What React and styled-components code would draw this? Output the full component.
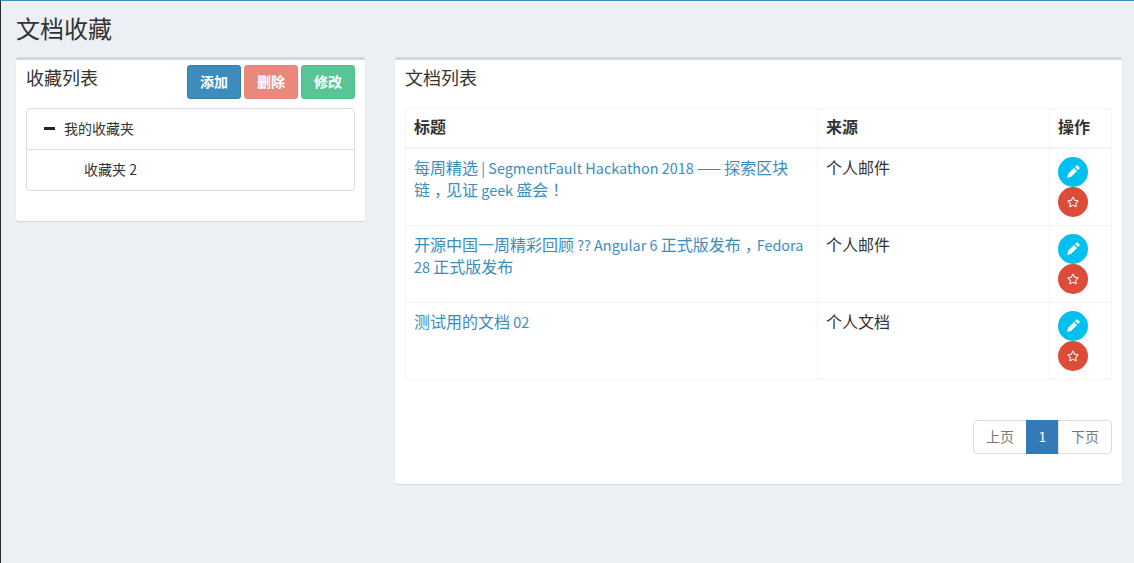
import React from "react";
import styled, { createGlobalStyle } from "styled-components";
import { FaRegStar } from "react-icons/fa";

const GlobalStyle = createGlobalStyle`
    html, body {
        margin: 0;
        padding: 0;
        background: #ecf0f5;
        font-family: "Noto Sans CJK SC", "Source Sans Pro", sans-serif;
        color: #333;
    }
    * { box-sizing: border-box; }
`;

const Page = styled.div`
    height: 563px;
    overflow: hidden;
    background: #ecf0f5;
    border-top: 1px solid #3c8dbc;
    border-left: 1px solid #222d32;
    padding: 0 12px 0 15px;
`;

const PageTitle = styled.h1`
    margin: 0;
    padding: 10px 0 0;
    height: 56px;
    font-size: 24px;
    line-height: 34px;
    font-weight: 400;
`;

const Columns = styled.div`
    display: flex;
    align-items: flex-start;
    gap: 30px;
`;

const Panel = styled.section`
    flex: ${(p) => (p.$wide ? "0 0 727px" : "0 0 349px")};
    height: ${(p) => (p.$wide ? "427px" : "164px")};
    padding: 0 10px;
    background: #fff;
    border-top: 3px solid #d2d6de;
    border-radius: 3px;
    box-shadow: 0 1px 1px rgba(0, 0, 0, 0.1);
`;

const PanelHead = styled.div`
    display: flex;
    justify-content: space-between;
    align-items: flex-start;
    height: 48px;
    padding-top: 4px;
`;

const PanelTitle = styled.h3`
    margin: 0;
    font-size: 18px;
    line-height: 26px;
    font-weight: 400;
`;

const Actions = styled.div`
    display: flex;
    gap: 3px;
    margin-top: 1px;
`;

const ActionButton = styled.button`
    width: 54px;
    height: 34px;
    padding: 0 0 2px;
    border: 1px solid ${(p) => p.$edge};
    border-radius: 3px;
    background: ${(p) => p.$bg};
    color: #fff;
    font: 700 14px/20px "Noto Sans CJK SC", sans-serif;
`;

const Tree = styled.ul`
    margin: 0;
    padding: 0;
    list-style: none;
    border: 1px solid #ddd;
    border-radius: 4px;
`;

const TreeItem = styled.li`
    display: flex;
    align-items: center;
    height: ${(p) => (p.$child ? "41px" : "40px")};
    padding-left: ${(p) => (p.$child ? "57px" : "17px")};
    padding-bottom: 2px;
    font-size: 14px;
    color: #333;
    & + & { border-top: 1px solid #ddd; }
`;

const MinusMark = styled.span`
    width: 11px;
    height: 3px;
    margin-right: 9px;
    background: #222;
`;

const Table = styled.table`
    width: 706px;
    border-collapse: collapse;
    table-layout: fixed;
    font-size: 16px;
    line-height: 22px;
`;

const HeadCell = styled.th`
    height: 39px;
    padding: 6px 8px 7px;
    vertical-align: top;
    text-align: left;
    font-weight: 700;
    color: #333;
    border: 1px solid #f4f4f4;
    border-bottom-width: 2px;
`;

const Cell = styled.td`
    height: 77px;
    padding: 7px 8px;
    vertical-align: top;
    border: 1px solid #f4f4f4;
    tr:first-child > & { height: 78px; }
`;

const DocLink = styled.a`
    color: #3c8dbc;
    text-decoration: none;
`;

const Latin = styled.span`
    font-size: 14.4px;
    line-height: 1;
`;

const Punct = styled.span`
    margin: 0 -4px 0 4px;
`;

const ButtonStack = styled.div`
    margin-top: 1px;
`;

const RoundButton = styled.button`
    display: flex;
    align-items: center;
    justify-content: center;
    width: 30px;
    height: 30px;
    padding: 0;
    border: none;
    border-radius: 50%;
    background: ${(p) => p.$bg};
    color: #fff;
    font-size: 12px;
`;

const Pager = styled.div`
    display: flex;
    justify-content: flex-end;
    width: 707px;
    margin-top: 40px;
`;

const PageLink = styled.a`
    height: 34px;
    width: ${(p) => p.$width}px;
    margin-left: -1px;
    text-align: center;
    font-size: 14px;
    line-height: 31px;
    color: ${(p) => (p.$active ? "#fff" : "#777")};
    background: ${(p) => (p.$active ? "#337ab7" : "#fff")};
    border: 1px solid ${(p) => (p.$active ? "#337ab7" : "#ddd")};
    &:first-child { border-radius: 4px 0 0 4px; }
    &:last-child { border-radius: 0 4px 4px 0; }
`;

const PencilIcon = () => (
    <svg width="14" height="14" viewBox="0 0 14 14" fill="currentColor">
        <path d="M1 13 L2.2 8.8 L8 3 L11 6 L5.2 11.8 Z" />
        <path d="M9 2 L10.5 0.5 Q11 0 11.5 0.5 L13.5 2.5 Q14 3 13.5 3.5 L12 5 Z" />
    </svg>
);

// the screenshot's Latin runs are narrower than the CJK font's, and its , ! sit centred
const MixedText = ({ text }) =>
    text.split(/([\x20-\x7e—]+|[，！])/).filter(Boolean).map((part, i) => {
        if (part === "，" || part === "！") return <Punct key={i}>{part}</Punct>;
        if (/^[\x20-\x7e—]+$/.test(part)) return <Latin key={i}>{part}</Latin>;
        return part;
    });

const docs = [
    { id: 1, title: "每周精选 | SegmentFault Hackathon 2018 —— 探索区块链，见证 geek 盛会！", source: "个人邮件" },
    { id: 2, title: "开源中国一周精彩回顾 ?? Angular 6 正式版发布，Fedora 28 正式版发布", source: "个人邮件" },
    { id: 3, title: "测试用的文档 02", source: "个人文档" },
];

export default function App() {
    return (
        <Page>
            <GlobalStyle />
            <PageTitle>文档收藏</PageTitle>
            <Columns>
                <Panel>
                    <PanelHead>
                        <PanelTitle>收藏列表</PanelTitle>
                        <Actions>
                            <ActionButton $bg="#3c8dbc" $edge="#367fa9">添加</ActionButton>
                            <ActionButton $bg="#ea887c" $edge="#e5837a">删除</ActionButton>
                            <ActionButton $bg="#5ac594" $edge="#54bd8c">修改</ActionButton>
                        </Actions>
                    </PanelHead>
                    <Tree>
                        <TreeItem><MinusMark />我的收藏夹</TreeItem>
                        <TreeItem $child>收藏夹 2</TreeItem>
                    </Tree>
                </Panel>
                <Panel $wide>
                    <PanelHead>
                        <PanelTitle>文档列表</PanelTitle>
                    </PanelHead>
                    <Table>
                        <colgroup>
                            <col width="412" />
                            <col width="232" />
                            <col width="62" />
                        </colgroup>
                        <thead>
                            <tr>
                                <HeadCell>标题</HeadCell>
                                <HeadCell>来源</HeadCell>
                                <HeadCell>操作</HeadCell>
                            </tr>
                        </thead>
                        <tbody>
                            {docs.map((doc) => (
                                <tr key={doc.id}>
                                    <Cell><DocLink href="#"><MixedText text={doc.title} /></DocLink></Cell>
                                    <Cell>{doc.source}</Cell>
                                    <Cell>
                                        <ButtonStack>
                                            <RoundButton $bg="#00c0ef"><PencilIcon /></RoundButton>
                                            <RoundButton $bg="#dd4b39"><FaRegStar /></RoundButton>
                                        </ButtonStack>
                                    </Cell>
                                </tr>
                            ))}
                        </tbody>
                    </Table>
                    <Pager>
                        <PageLink $width={54}>上页</PageLink>
                        <PageLink $width={33} $active>1</PageLink>
                        <PageLink $width={54}>下页</PageLink>
                    </Pager>
                </Panel>
            </Columns>
        </Page>
    );
}
